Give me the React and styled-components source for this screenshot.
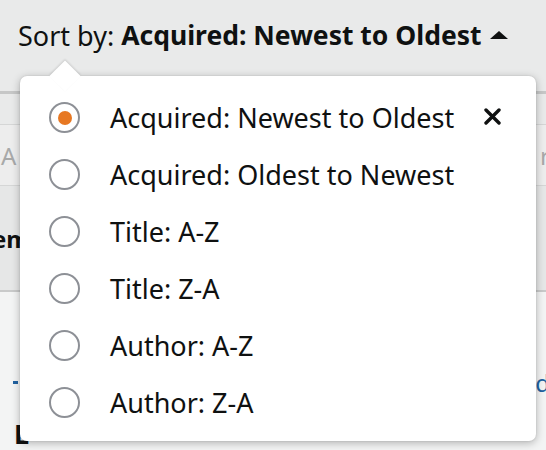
import React from 'react';
import styled, { createGlobalStyle } from 'styled-components';

const Global = createGlobalStyle`
  html, body { margin: 0; padding: 0; }
  body {
    width: 546px;
    height: 450px;
    overflow: hidden;
    background: #e9eaea;
    font-family: "Noto Sans", "Liberation Sans", sans-serif;
    color: #0f1111;
  }
`;

const Page = styled.div`
  position: relative;
  width: 546px;
  height: 450px;
  overflow: hidden;
  background: #e9eaea;
`;

const SortBar = styled.div`
  display: flex;
  align-items: center;
  height: 72px;
  padding: 0 0 1px 18px;
  box-sizing: border-box;
  margin-bottom: 19px;
  font-size: 27px;
  line-height: 1;
`;

const SortLabel = styled.span`
  white-space: pre;
`;

const SortValue = styled.span`
  font-weight: 700;
  font-size: 26.5px;
`;

const Caret = styled.span`
  display: inline-block;
  width: 0;
  height: 0;
  margin-left: 8px;
  border-left: 9px solid transparent;
  border-right: 9px solid transparent;
  border-bottom: 8px solid #0f1111;
  transform: translateY(-1px);
`;

const Table = styled.div`
  border-top: 3px solid #c6c7c7;
`;

const Row = styled.div`
  display: flex;
  justify-content: space-between;
  align-items: center;
  height: ${p => p.h}px;
  border-bottom: ${p => (p.thick ? 2 : 1)}px solid ${p => (p.thick ? '#c9caca' : '#d5d6d6')};
  background: ${p => p.bg || 'transparent'};
  font-size: 24px;
  color: ${p => p.color || '#0f1111'};
  font-weight: ${p => (p.bold ? 700 : 400)};
`;

const Cell = styled.span`
  white-space: nowrap;
  margin: ${p => p.m || '0'};
`;

const Lower = styled.div`
  background: #f3f4f4;
  height: 200px;
  display: flex;
  flex-direction: column;
  font-size: 24px;
`;

const LinkRow = styled.div`
  display: flex;
  justify-content: space-between;
  align-items: center;
  margin-top: 74px;
  color: #2162a1;
`;

const Dash = styled.span`
  width: 5px;
  height: 3px;
  margin-left: 13px;
  background: #2162a1;
`;

const BoldRow = styled.div`
  margin-top: 16px;
  padding-left: 14px;
  font-weight: 700;
  font-size: 27px;
`;

const Popover = styled.div`
  position: absolute;
  left: 20px;
  top: 76px;
  width: 516px;
  height: 365px;
  box-sizing: border-box;
  background: #fff;
  border-radius: 7px;
  box-shadow: 0 2px 8px rgba(0, 0, 0, 0.28), 0 0 2px rgba(0, 0, 0, 0.12);
  padding: 13px 0 10px 29px;
`;

const Arrow = styled.div`
  position: absolute;
  left: 34px;
  top: -11px;
  width: 22px;
  height: 22px;
  background: #fff;
  transform: rotate(45deg);
  box-shadow: -1px -1px 2px rgba(0, 0, 0, 0.12);
`;

const Options = styled.ul`
  position: relative;
  list-style: none;
  margin: 0;
  padding: 0;
  display: flex;
  flex-direction: column;
`;

const Option = styled.li`
  display: flex;
  align-items: center;
  height: 57px;
  font-size: 27px;
  color: #0f1111;
  white-space: nowrap;
`;

const Radio = styled.span`
  width: 31px;
  height: 31px;
  box-sizing: border-box;
  border-radius: 50%;
  border: 2px solid #8d9096;
  display: flex;
  align-items: center;
  justify-content: center;
  margin-right: 30px;
  flex-shrink: 0;

  &::after {
    content: '';
    width: 14px;
    height: 14px;
    border-radius: 50%;
    background: ${p => (p.checked ? '#e77823' : 'transparent')};
  }
`;

const Close = styled.button`
  position: absolute;
  right: 35px;
  top: 32px;
  width: 17px;
  height: 17px;
  padding: 0;
  border: 0;
  background: none;
  display: flex;
`;

const options = [
  'Acquired: Newest to Oldest',
  'Acquired: Oldest to Newest',
  'Title: A-Z',
  'Title: Z-A',
  'Author: A-Z',
  'Author: Z-A',
];

export default function App() {
  return (
    <Page>
      <Global />
      <SortBar>
        <SortLabel>Sort by: </SortLabel>
        <SortValue>Acquired: Newest to Oldest</SortValue>
        <Caret />
      </SortBar>
      <Table>
        <Row h={30}> </Row>
        <Row h={60} color="#a8a9a9" bg="#ededed">
          <Cell m="0 0 0 1px">A</Cell>
          <Cell m="0 -4px 0 0">r</Cell>
        </Row>
        <Row h={104} thick bold bg="#e6e7e7">
          <Cell m="0 0 0 -8px">em</Cell>
          <Cell> </Cell>
        </Row>
        <Lower>
          <LinkRow>
            <Dash />
            <Cell m="0 -4px 0 0">d</Cell>
          </LinkRow>
          <BoldRow>L</BoldRow>
        </Lower>
      </Table>
      <Popover>
        <Arrow />
        <Options>
          {options.map((o, i) => (
            <Option key={o}>
              <Radio checked={i === 0} />
              {o}
            </Option>
          ))}
        </Options>
        <Close aria-label="Close">
          <svg width="17" height="17" viewBox="0 0 17 17">
            <path d="M2 2 L15 15 M15 2 L2 15" stroke="#0f1111" strokeWidth="3.4" strokeLinecap="round" />
          </svg>
        </Close>
      </Popover>
    </Page>
  );
}
